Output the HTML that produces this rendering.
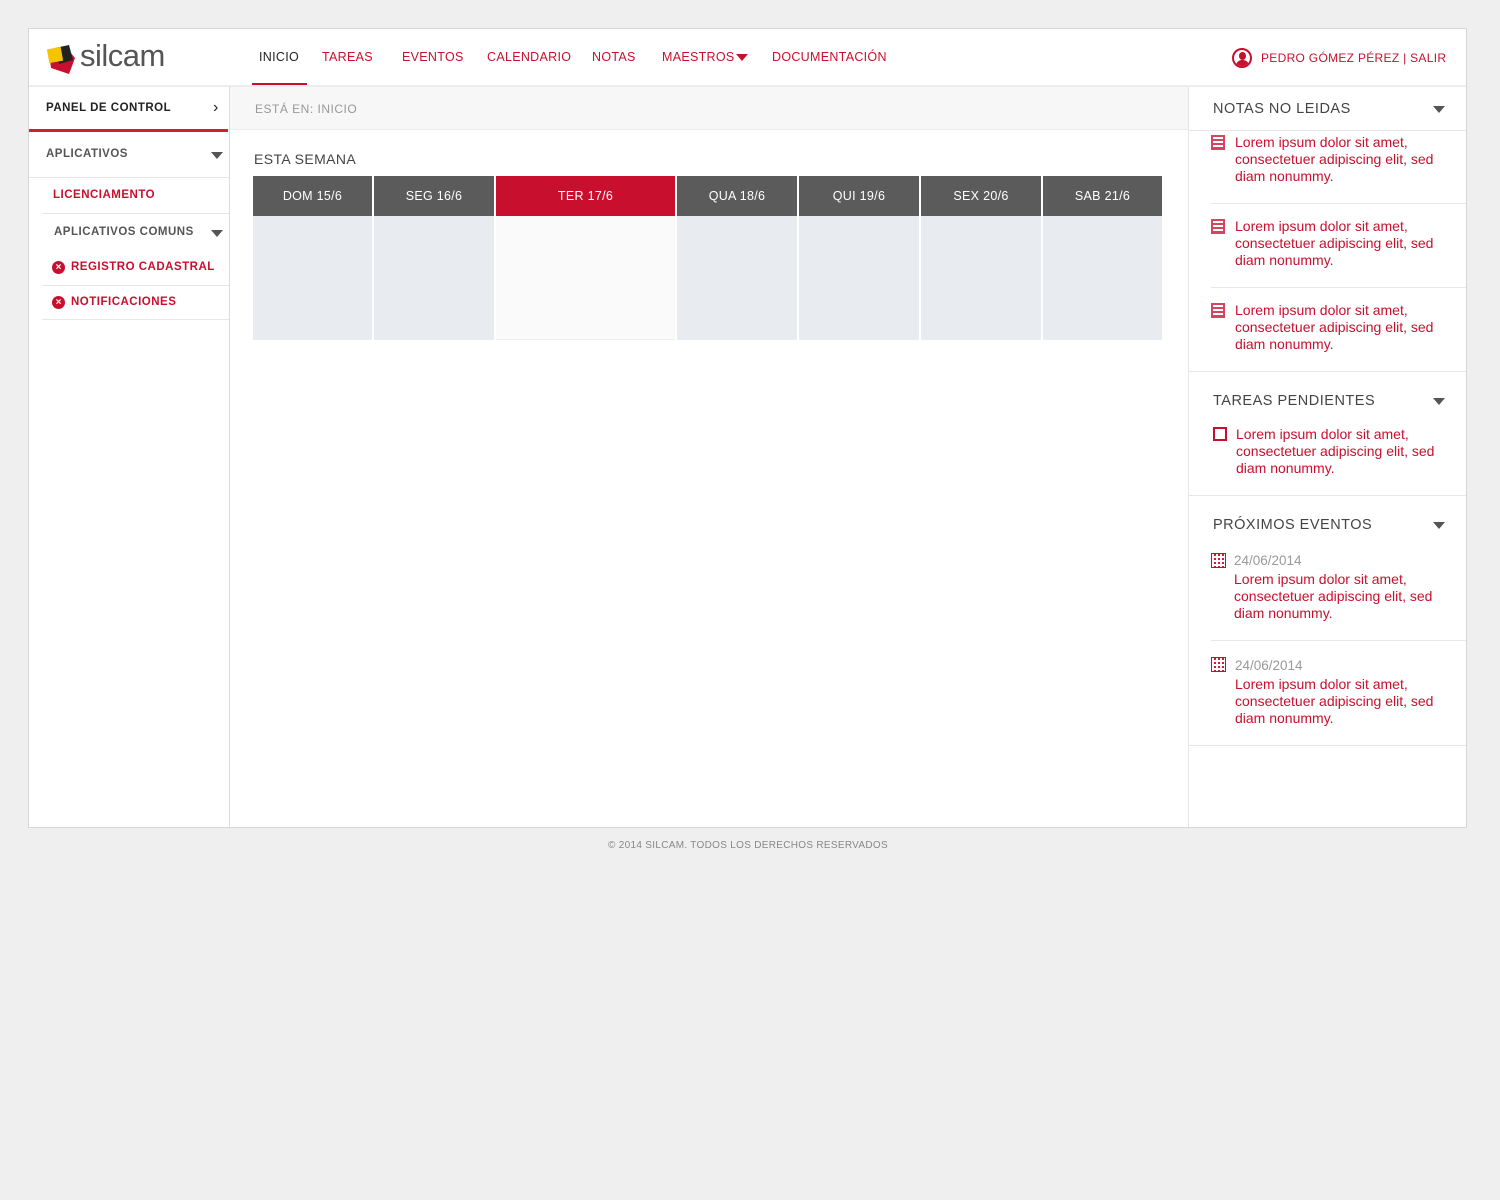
<!DOCTYPE html>
<html><head><meta charset="utf-8"><style>
*{margin:0;padding:0;box-sizing:border-box}
body{width:1500px;height:1200px;background:#efefef;font-family:"Liberation Sans",sans-serif;position:relative;overflow:hidden}
.a{position:absolute}
#frame{left:28px;top:28px;width:1439px;height:800px;background:#fff;border:1px solid #d6d6d6}
.nav{top:50px;font-size:12.5px;color:#c8102e;letter-spacing:.3px}
.side{font-size:11.5px;font-weight:bold;letter-spacing:.5px}
.hl{height:1px;background:#e6e6e6}
.tri{width:0;height:0;border-left:6px solid transparent;border-right:6px solid transparent;border-top:7px solid #555}
.dh{top:176px;height:40px;background:#5b5b5b;color:#fff;font-size:12.5px;text-align:center;line-height:40px;letter-spacing:.3px}
.db{top:216px;height:124px;background:#e8ebef}
.rt{font-size:14.5px;color:#444;letter-spacing:.5px}
.lt{font-size:14px;color:#c8102e;line-height:17px}
.x{width:13px;height:13px;border-radius:50%;background:#c8102e;color:#fff;font-size:10px;line-height:13px;text-align:center;font-weight:bold}
.nic{width:14px;height:15px;border:2px solid #d64560;background:repeating-linear-gradient(#fff 0 2px,#d64560 2px 4px)}
.cic{width:15px;height:15px;border:1.5px solid #c8102e;background:radial-gradient(circle,#c8102e 1px,transparent 1.3px) 1px 3px/4px 4px}
</style></head><body>
<div id="frame" class="a"></div>
<svg class="a" style="left:45px;top:42px" width="36" height="34" viewBox="0 0 36 34"><path d="M4 10 L20 4 L30 16 L24 32 L6 26 Z" fill="#c8102e"/><path d="M10 6 L24 3 L28 18 L14 22 Z" fill="#222"/><rect x="3" y="6" width="14" height="14" fill="#f5c400" transform="rotate(-10 10 13)"/></svg>
<div class="a" style="left:80px;top:38px;font-size:31px;color:#555;letter-spacing:-0.5px">silcam</div>
<div class="a nav" style="left:259px;color:#222">INICIO</div>
<div class="a" style="left:252px;top:83px;width:55px;height:2px;background:#c8102e"></div>
<div class="a nav" style="left:322px">TAREAS</div>
<div class="a nav" style="left:402px">EVENTOS</div>
<div class="a nav" style="left:487px">CALENDARIO</div>
<div class="a nav" style="left:592px">NOTAS</div>
<div class="a nav" style="left:662px">MAESTROS</div>
<div class="a tri" style="left:736px;top:54px;border-top-color:#c8102e"></div>
<div class="a nav" style="left:772px">DOCUMENTACIÓN</div>
<div class="a" style="left:1232px;top:48px;width:20px;height:20px;border:2px solid #c8102e;border-radius:50%;overflow:hidden"><div class="a" style="left:5px;top:2px;width:7px;height:8px;border-radius:50%;background:#c8102e"></div><div class="a" style="left:2px;top:10px;width:13px;height:10px;border-radius:6px 6px 0 0;background:#c8102e"></div></div>
<div class="a nav" style="left:1261px;top:51px;font-size:12px">PEDRO GÓMEZ PÉREZ | SALIR</div>
<div class="a" style="left:29px;top:85px;width:1437px;height:2px;background:#ececec"></div>
<div class="a" style="left:229px;top:86px;width:1px;height:741px;background:#ddd"></div>
<div class="a side" style="left:46px;top:102px;color:#222">PANEL DE CONTROL</div>
<div class="a" style="left:213px;top:99px;font-size:16px;color:#222">&#x203A;</div>
<div class="a" style="left:29px;top:129px;width:199px;height:3px;background:#d0202e"></div>
<div class="a side" style="left:46px;top:148px;color:#555">APLICATIVOS</div>
<div class="a tri" style="left:211px;top:152px"></div>
<div class="a hl" style="left:29px;top:177px;width:200px"></div>
<div class="a side" style="left:53px;top:189px;color:#c8102e">LICENCIAMENTO</div>
<div class="a hl" style="left:42px;top:213px;width:187px"></div>
<div class="a side" style="left:54px;top:226px;color:#555">APLICATIVOS COMUNS</div>
<div class="a tri" style="left:211px;top:230px"></div>
<div class="a x" style="left:52px;top:261px">×</div>
<div class="a side" style="left:71px;top:261px;color:#c8102e">REGISTRO CADASTRAL</div>
<div class="a hl" style="left:42px;top:285px;width:187px"></div>
<div class="a x" style="left:52px;top:296px">×</div>
<div class="a side" style="left:71px;top:296px;color:#c8102e">NOTIFICACIONES</div>
<div class="a hl" style="left:42px;top:319px;width:187px"></div>
<div class="a" style="left:230px;top:87px;width:958px;height:43px;background:#f7f7f7;border-bottom:1px solid #ececec"></div>
<div class="a" style="left:255px;top:102px;font-size:12px;color:#999;letter-spacing:.5px">ESTÁ EN: INICIO</div>
<div class="a" style="left:254px;top:151px;font-size:14px;color:#444;letter-spacing:.4px">ESTA SEMANA</div>
<div class="a dh" style="left:253px;width:119px">DOM 15/6</div>
<div class="a dh" style="left:374px;width:120px">SEG 16/6</div>
<div class="a dh" style="left:496px;width:179px;background:#c8102e">TER 17/6</div>
<div class="a dh" style="left:677px;width:120px">QUA 18/6</div>
<div class="a dh" style="left:799px;width:120px">QUI 19/6</div>
<div class="a dh" style="left:921px;width:120px">SEX 20/6</div>
<div class="a dh" style="left:1043px;width:119px">SAB 21/6</div>
<div class="a db" style="left:253px;width:119px"></div>
<div class="a db" style="left:374px;width:120px"></div>
<div class="a db" style="left:496px;width:179px;background:#fafafa;border-bottom:1px solid #eee"></div>
<div class="a db" style="left:677px;width:120px"></div>
<div class="a db" style="left:799px;width:120px"></div>
<div class="a db" style="left:921px;width:120px"></div>
<div class="a db" style="left:1043px;width:119px"></div>
<div class="a" style="left:1188px;top:87px;width:1px;height:740px;background:#e6e6e6"></div>
<div class="a rt" style="left:1213px;top:101px">NOTAS NO LEIDAS</div>
<div class="a tri" style="left:1433px;top:106px"></div>
<div class="a hl" style="left:1189px;top:130px;width:277px"></div>
<div class="a nic" style="left:1211px;top:135px"></div>
<div class="a lt" style="left:1235px;top:134px">Lorem ipsum dolor sit amet,<br>consectetuer adipiscing elit, sed<br>diam nonummy.</div>
<div class="a hl" style="left:1211px;top:203px;width:255px"></div>
<div class="a nic" style="left:1211px;top:219px"></div>
<div class="a lt" style="left:1235px;top:218px">Lorem ipsum dolor sit amet,<br>consectetuer adipiscing elit, sed<br>diam nonummy.</div>
<div class="a hl" style="left:1211px;top:287px;width:255px"></div>
<div class="a nic" style="left:1211px;top:303px"></div>
<div class="a lt" style="left:1235px;top:302px">Lorem ipsum dolor sit amet,<br>consectetuer adipiscing elit, sed<br>diam nonummy.</div>
<div class="a hl" style="left:1189px;top:371px;width:277px"></div>
<div class="a rt" style="left:1213px;top:393px">TAREAS PENDIENTES</div>
<div class="a tri" style="left:1433px;top:398px"></div>
<div class="a" style="left:1213px;top:427px;width:14px;height:14px;border:2px solid #c8102e"></div>
<div class="a lt" style="left:1236px;top:426px">Lorem ipsum dolor sit amet,<br>consectetuer adipiscing elit, sed<br>diam nonummy.</div>
<div class="a hl" style="left:1189px;top:495px;width:277px"></div>
<div class="a rt" style="left:1213px;top:517px">PRÓXIMOS EVENTOS</div>
<div class="a tri" style="left:1433px;top:522px"></div>
<div class="a cic" style="left:1211px;top:553px"></div>
<div class="a" style="left:1234px;top:553px;font-size:13.5px;color:#999">24/06/2014</div>
<div class="a lt" style="left:1234px;top:571px">Lorem ipsum dolor sit amet,<br>consectetuer adipiscing elit, sed<br>diam nonummy.</div>
<div class="a hl" style="left:1211px;top:640px;width:255px"></div>
<div class="a cic" style="left:1211px;top:657px"></div>
<div class="a" style="left:1235px;top:658px;font-size:13.5px;color:#999">24/06/2014</div>
<div class="a lt" style="left:1235px;top:676px">Lorem ipsum dolor sit amet,<br>consectetuer adipiscing elit, sed<br>diam nonummy.</div>
<div class="a hl" style="left:1189px;top:745px;width:277px"></div>
<div class="a" style="left:0;width:1496px;top:840px;text-align:center;font-size:10px;color:#888;letter-spacing:.3px">© 2014 SILCAM. TODOS LOS DERECHOS RESERVADOS</div>
</body></html>
